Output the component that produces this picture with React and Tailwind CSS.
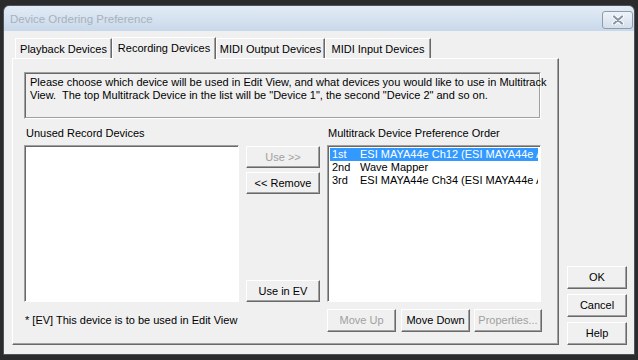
import React from "react";

const font = "font-['Liberation_Sans',Arial,sans-serif]";

function Btn({ w, h = "h-[22px]", disabled, children }) {
  return (
    <div
      className={`${w} ${h} flex items-center justify-center bg-[#f0f0f0] border-t border-l border-white border-r border-b border-r-[#696969] border-b-[#696969] shadow-[inset_-1px_-1px_0_#a0a0a0] text-[11px] leading-none ${
        disabled ? "text-[#a0a0a0]" : "text-black"
      }`}
    >
      {children}
    </div>
  );
}

function Tab({ w, selected, children }) {
  return (
    <div
      className={`${w} ${
        selected ? "h-[22px] z-10 -mb-px pb-[1px]" : "h-[20px] pt-[1px]"
      } relative flex items-center justify-center bg-[#f0f0f0] border-t border-l border-white border-r border-r-[#696969] shadow-[inset_-1px_0_0_#a0a0a0] text-[11px] text-black whitespace-nowrap`}
    >
      {children}
    </div>
  );
}

const devices = [
  ["1st", "ESI MAYA44e Ch12 (ESI MAYA44e A"],
  ["2nd", "Wave Mapper"],
  ["3rd", "ESI MAYA44e Ch34 (ESI MAYA44e A"],
];

export default function App() {
  return (
    <div className={`w-[638px] h-[360px] bg-[#2b2b2b] pt-[5px] pl-[3px] pr-[3px] pb-[5px] flex ${font}`}>
      <div className="flex-1 flex flex-col rounded-t-[6px] border border-[#4a5562] overflow-hidden">
        {/* title bar */}
        <div className="h-[25px] shrink-0 flex items-center justify-between pl-[6px] pr-[1px] bg-gradient-to-b from-[#e3ecf6] to-[#c8d8ea]">
          <span className="text-[11.5px] text-[#a8b1bb] pt-[2px]">Device Ordering Preference</span>
          <div className="w-[31px] h-[18px] mt-[3px] rounded-[3px] border border-[#8e9cad] bg-gradient-to-b from-[#eef3f8] to-[#d3dfec] flex items-center justify-center">
            <svg width="14" height="10" viewBox="0 0 14 10">
              <path d="M3 1.5 L11 8.5 M11 1.5 L3 8.5" stroke="#ffffff" strokeWidth="4" strokeLinecap="round" />
              <path d="M3 1.5 L11 8.5 M11 1.5 L3 8.5" stroke="#8a95a3" strokeWidth="2.2" strokeLinecap="round" />
            </svg>
          </div>
        </div>

        {/* body */}
        <div className="flex-1 flex bg-[#f0f0f0] pb-[9px]">
          {/* tab control */}
          <div className="ml-[8px] mt-[5px] w-[547px] flex flex-col">
            <div className="flex items-end pl-[3px] h-[22px]">
              <Tab w="w-[97px]">Playback Devices</Tab>
              <Tab w="w-[104px]" selected>Recording Devices</Tab>
              <Tab w="w-[109px]">MIDI Output Devices</Tab>
              <Tab w="w-[106px]">MIDI Input Devices</Tab>
            </div>

            <div className="flex-1 flex flex-col border-t border-l border-white border-r border-b border-r-[#696969] border-b-[#696969] shadow-[inset_-1px_-1px_0_#a0a0a0] pl-[11px] pt-[13px] text-[11px] text-black">
              {/* info box */}
              <div className="w-[517px] h-[47px] border-t border-l border-[#a0a0a0] border-r border-b border-r-white border-b-white">
                <div className="h-full border border-[#696969] border-r-[#a0a0a0] border-b-[#a0a0a0] pl-[4px] pt-[2px] leading-[13px] whitespace-pre">
                  {"Please choose which device will be used in Edit View, and what devices you would like to use in Multitrack\nView.  The top Multitrack Device in the list will be \"Device 1\", the second \"Device 2\" and so on."}
                </div>
              </div>

              {/* labels */}
              <div className="flex mt-[8px] h-[13px] leading-[13px]">
                <div className="w-[303px] pl-[2px]">Unused Record Devices</div>
                <div className="pl-[1px]">Multitrack Device Preference Order</div>
              </div>

              {/* lists */}
              <div className="flex mt-[5px] h-[157px] gap-[7px]">
                <div className="w-[215px] h-full bg-white border-t border-l border-[#a0a0a0] border-r border-b border-r-white border-b-white shadow-[inset_1px_1px_0_#696969]" />
                <div className="w-[74px] flex flex-col pt-[1px]">
                  <Btn w="w-[74px]" disabled>Use &gt;&gt;</Btn>
                  <div className="mt-[4px]">
                    <Btn w="w-[74px]">&lt;&lt; Remove</Btn>
                  </div>
                  <div className="mt-auto">
                    <Btn w="w-[74px]">Use in EV</Btn>
                  </div>
                </div>
                <div className="w-[214px] h-full bg-white border-t border-l border-[#a0a0a0] border-r border-b border-r-white border-b-white shadow-[inset_1px_1px_0_#696969] pl-[2px] pt-[2px] pr-[2px] overflow-hidden">
                  {devices.map(([n, name], i) => (
                    <div
                      key={n}
                      className={`flex h-[13px] leading-[13px] whitespace-nowrap overflow-hidden pl-[2px] ${
                        i === 0 ? "bg-[#3399ff] text-white" : "text-black"
                      }`}
                    >
                      <span className="w-[28px] shrink-0">{n}</span>
                      <span>{name}</span>
                    </div>
                  ))}
                </div>
              </div>

              {/* bottom row */}
              <div className="flex items-center mt-[7px] h-[23px]">
                <div className="w-[303px] pl-[1px]">* [EV] This device is to be used in Edit View</div>
                <Btn w="w-[69px]" h="h-[23px]" disabled>Move Up</Btn>
                <div className="ml-[5px]">
                  <Btn w="w-[69px]" h="h-[23px]">Move Down</Btn>
                </div>
                <div className="ml-[4px]">
                  <Btn w="w-[68px]" h="h-[23px]" disabled>Properties...</Btn>
                </div>
              </div>
            </div>
          </div>

          {/* dialog buttons */}
          <div className="ml-[8px] flex flex-col justify-end gap-[5px]">
            <Btn w="w-[60px]" h="h-[23px]">OK</Btn>
            <Btn w="w-[60px]" h="h-[23px]">Cancel</Btn>
            <Btn w="w-[60px]" h="h-[23px]">Help</Btn>
          </div>
        </div>
      </div>
    </div>
  );
}
